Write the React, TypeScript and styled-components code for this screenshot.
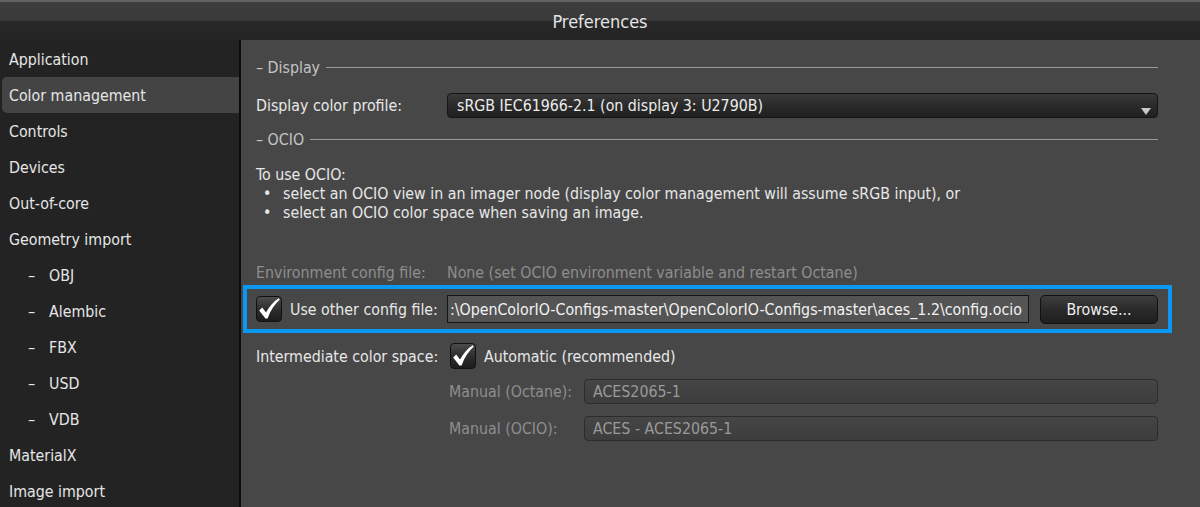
import styled, { createGlobalStyle } from "styled-components";

const GlobalStyle = createGlobalStyle`
  html, body {
    margin: 0;
    padding: 0;
    background: #474747;
    overflow: hidden;
  }
  * { box-sizing: border-box; }
`;

const navItems = [
    { label: "Application" },
    { label: "Color management", selected: true },
    { label: "Controls" },
    { label: "Devices" },
    { label: "Out-of-core" },
    { label: "Geometry import" },
    { label: "OBJ", sub: true },
    { label: "Alembic", sub: true },
    { label: "FBX", sub: true },
    { label: "USD", sub: true },
    { label: "VDB", sub: true },
    { label: "MaterialX" },
    { label: "Image import" },
];

function CheckMark() {
    return (
        <svg width="24" height="24" viewBox="0 0 24 24">
            <path
                d="M2.2 13.4 L5.2 10.6 L9 15.4 C12.2 9.6 16.4 4.6 21.8 1.2 L22.8 2.4 C17.8 6.8 13.6 13 10.6 21.4 L8.4 21.4 Z"
                fill="#ffffff"
            />
        </svg>
    );
}

export default function App() {
    return (
        <>
            <GlobalStyle />
            <Window>
                <TitleBar>Preferences</TitleBar>
                <Body>
                    <Sidebar>
                        {navItems.map((item) => (
                            <NavItem key={item.label} selected={!!item.selected} sub={!!item.sub}>
                                {item.sub && <Dash>–</Dash>}
                                {item.label}
                            </NavItem>
                        ))}
                    </Sidebar>
                    <Content>
                        <SectionHeader>
                            <span>– Display</span>
                            <Rule />
                        </SectionHeader>
                        <FormRow style={{ marginTop: 15 }}>
                            <Label>Display color profile:</Label>
                            <Dropdown>
                                sRGB IEC61966-2.1 (on display 3: U2790B)
                                <Arrow />
                            </Dropdown>
                        </FormRow>
                        <SectionHeader style={{ marginTop: 10 }}>
                            <span>– OCIO</span>
                            <Rule />
                        </SectionHeader>
                        <Info>
                            <div>To use OCIO:</div>
                            <Bullet>select an OCIO view in an imager node (display color management will assume sRGB input), or</Bullet>
                            <Bullet>select an OCIO color space when saving an image.</Bullet>
                        </Info>
                        <FormRow style={{ marginTop: 41 }}>
                            <Label disabled>Environment config file:</Label>
                            <Value disabled>None (set OCIO environment variable and restart Octane)</Value>
                        </FormRow>
                        <Highlight>
                            <CheckLabel>
                                <CheckBox><CheckMark /></CheckBox>
                                Use other config file:
                            </CheckLabel>
                            <PathInput>:\OpenColorIO-Configs-master\OpenColorIO-Configs-master\aces_1.2\config.ocio</PathInput>
                            <Button>Browse...</Button>
                        </Highlight>
                        <FormRow style={{ marginTop: 10 }}>
                            <Label>Intermediate color space:</Label>
                            <OptionCheck>
                                <CheckBox><CheckMark /></CheckBox>
                                Automatic (recommended)
                            </OptionCheck>
                        </FormRow>
                        <SubRow style={{ marginTop: 10 }}>
                            <SubLabel>Manual (Octane):</SubLabel>
                            <DisabledField>ACES2065-1</DisabledField>
                        </SubRow>
                        <SubRow style={{ marginTop: 12 }}>
                            <SubLabel>Manual (OCIO):</SubLabel>
                            <DisabledField>ACES - ACES2065-1</DisabledField>
                        </SubRow>
                    </Content>
                </Body>
            </Window>
        </>
    );
}

const Window = styled.div`
    width: 1200px;
    height: 507px;
    display: flex;
    flex-direction: column;
    font-family: "DejaVu Sans Condensed", "DejaVu Sans", sans-serif;
    font-size: 15.8px;
    color: #e8e8e8;
`;

const TitleBar = styled.div`
    height: 40px;
    flex-shrink: 0;
    display: flex;
    align-items: center;
    justify-content: center;
    padding-top: 1px;
    font-size: 18px;
    color: #e4e4e4;
    border-top: 2px solid #626262;
    background: linear-gradient(to bottom, #3d3d3d 0%, #393939 48%, #272727 52%, #242424 100%);
`;

const Body = styled.div`
    flex: 1;
    display: flex;
    min-height: 0;
`;

const Sidebar = styled.div`
    width: 241px;
    flex-shrink: 0;
    background: #232323;
    border-right: 2px solid #0b0b0b;
    padding-top: 1px;
    display: flex;
    flex-direction: column;
`;

const NavItem = styled.div<{ selected: boolean; sub: boolean }>`
    height: 36px;
    flex-shrink: 0;
    display: flex;
    align-items: center;
    margin-left: ${(p) => (p.selected ? "2px" : "0")};
    padding-left: ${(p) => (p.sub ? "28px" : p.selected ? "7px" : "9px")};
    border-radius: 5px 0 0 5px;
    background: ${(p) => (p.selected ? "#444444" : "transparent")};
    color: #e6e6e6;
`;

const Dash = styled.span`
    width: 21px;
`;

const Content = styled.div`
    flex: 1;
    padding: 16px 42px 0 15px;
    display: flex;
    flex-direction: column;
    background: #474747;
`;

const SectionHeader = styled.div`
    height: 22px;
    display: flex;
    align-items: center;
    gap: 6px;
    color: #c4c4c4;
`;

const Rule = styled.div`
    flex: 1;
    height: 1px;
    background: #9a9a9a;
`;

const FormRow = styled.div`
    display: flex;
    align-items: center;
`;

const Label = styled.div<{ disabled?: boolean }>`
    width: 191px;
    flex-shrink: 0;
    color: ${(p) => (p.disabled ? "#8e8e8e" : "#e8e8e8")};
`;

const Value = styled.div<{ disabled?: boolean }>`
    color: ${(p) => (p.disabled ? "#8e8e8e" : "#e8e8e8")};
    line-height: 19px;
`;

const Dropdown = styled.div`
    position: relative;
    flex: 1;
    height: 25px;
    display: flex;
    align-items: center;
    padding-left: 9px;
    border: 1px solid #151515;
    border-radius: 4px;
    background: linear-gradient(to bottom, #3a3a3a 0%, #2a2a2a 50%, #202020 100%);
    color: #ececec;
`;

const Arrow = styled.span`
    position: absolute;
    right: 6px;
    top: 14px;
    width: 0;
    height: 0;
    border-left: 5px solid transparent;
    border-right: 5px solid transparent;
    border-top: 7px solid #c8c8c8;
`;

const Info = styled.div`
    margin-top: 15px;
    line-height: 19px;
    color: #e8e8e8;
`;

const Bullet = styled.div`
    display: flex;
    padding-left: 7px;
    &::before {
        content: "•";
        width: 20px;
        flex-shrink: 0;
    }
`;

const Highlight = styled.div`
    margin: 3px -14px 0 -13px;
    height: 48px;
    border: 4px solid #0a98f2;
    display: flex;
    align-items: center;
    padding: 0 10px 0 9px;
`;

const CheckLabel = styled.div`
    display: flex;
    align-items: center;
    gap: 8px;
    flex-shrink: 0;
`;

const OptionCheck = styled(CheckLabel)`
    margin-left: 3px;
`;

const CheckBox = styled.div`
    width: 26px;
    height: 26px;
    flex-shrink: 0;
    border: 1px solid #111;
    border-radius: 4px;
    background: linear-gradient(to bottom, #4c4c4c 0%, #2e2e2e 50%, #1c1c1c 100%);
    display: flex;
    align-items: center;
    justify-content: center;
`;

const PathInput = styled.div`
    margin-left: 9px;
    flex: 1;
    height: 28px;
    display: flex;
    align-items: center;
    padding-left: 2px;
    overflow: hidden;
    white-space: nowrap;
    border: 1px solid #161616;
    background: #545454;
    color: #f2f2f2;
`;

const Button = styled.div`
    margin-left: 11px;
    width: 118px;
    height: 29px;
    flex-shrink: 0;
    display: flex;
    align-items: center;
    justify-content: center;
    border: 1px solid #111;
    border-radius: 5px;
    background: linear-gradient(to bottom, #3e3e3e 0%, #2a2a2a 50%, #1f1f1f 100%);
    color: #eeeeee;
`;

const SubRow = styled.div`
    display: flex;
    align-items: center;
    padding-left: 193px;
`;

const SubLabel = styled.div`
    width: 135px;
    flex-shrink: 0;
    color: #8e8e8e;
`;

const DisabledField = styled.div`
    flex: 1;
    height: 25px;
    display: flex;
    align-items: center;
    padding-left: 8px;
    border: 1px solid #2c2c2c;
    border-radius: 4px;
    background: linear-gradient(to bottom, #454545, #3d3d3d);
    color: #9a9a9a;
`;
